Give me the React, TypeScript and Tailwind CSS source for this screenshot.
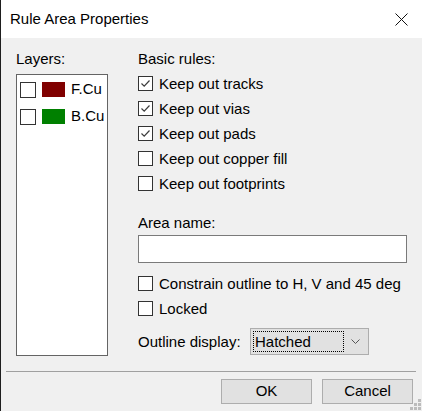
import * as React from "react";

const FONT = { fontFamily: '"Liberation Sans", Arial, sans-serif' };

function CheckBox({ checked = false, size = 15 }: { checked?: boolean; size?: number }) {
  return (
    <span
      className="flex items-center justify-center border border-[#333333] bg-white shrink-0"
      style={{ width: size, height: size }}
    >
      {checked && (
        <svg width="11" height="11" viewBox="0 0 11 11">
          <path d="M1.5 5.5 L4.2 8.2 L9.5 2.5" fill="none" stroke="#3c3c3c" strokeWidth="1.2" />
        </svg>
      )}
    </span>
  );
}

function RuleRow({ label, checked }: { label: string; checked?: boolean }) {
  return (
    <div className="flex items-center h-[25px] gap-[6px]">
      <CheckBox checked={checked} />
      <span>{label}</span>
    </div>
  );
}

function LayerRow({ name, color }: { name: string; color: string }) {
  return (
    <div className="flex items-center h-[27px]">
      <CheckBox size={16} />
      <span className={`ml-[6px] w-[23px] h-[15px] ${color}`} />
      <span className="ml-[6px]">{name}</span>
    </div>
  );
}

export default function App(): React.JSX.Element {
  return (
    <div
      className="relative w-[422px] h-[411px] bg-[#f0f0f0] border-l border-[#1e1e1e] flex flex-col text-[15px] text-black overflow-hidden"
      style={FONT}
    >
      {/* Title bar */}
      <div className="h-[38px] bg-white flex items-center justify-between pl-[9px] pr-[14px] shrink-0">
        <span>Rule Area Properties</span>
        <svg width="13" height="13" viewBox="0 0 13 13">
          <path d="M0.5 0.5 L12.5 12.5 M12.5 0.5 L0.5 12.5" stroke="#111" strokeWidth="1" />
        </svg>
      </div>

      {/* Body */}
      <div className="flex pt-[11px] pl-[15px]">
        {/* Layers */}
        <div className="flex flex-col w-[92px]">
          <div className="leading-[20px]">Layers:</div>
          <div className="mt-[5px] h-[282px] bg-white border border-[#646464] pl-[3px] pt-[1px]">
            <LayerRow name="F.Cu" color="bg-[#800000]" />
            <LayerRow name="B.Cu" color="bg-[#008000]" />
          </div>
        </div>

        {/* Rules */}
        <div className="flex flex-col ml-[30px] w-[269px] leading-[20px]">
          <div>Basic rules:</div>
          <div className="mt-[2px]">
            <RuleRow label="Keep out tracks" checked />
            <RuleRow label="Keep out vias" checked />
            <RuleRow label="Keep out pads" checked />
            <RuleRow label="Keep out copper fill" />
            <RuleRow label="Keep out footprints" />
          </div>
          <div className="mt-[17px]">Area name:</div>
          <input
            className="mt-[2px] h-[28px] w-full bg-white border border-[#7a7a7a] outline-none px-1"
            style={FONT}
          />
          <div className="mt-[8px]">
            <RuleRow label="Constrain outline to H, V and 45 deg" />
            <RuleRow label="Locked" />
          </div>
          <div className="mt-[7px] flex items-center h-[27px]">
            <span className="w-[112px]">Outline display:</span>
            <div className="w-[119px] h-[27px] bg-[#e1e1e1] border border-[#adadad] flex items-center pl-[2px] pr-[8px]">
              <div className="w-[91px] h-[21px] border border-dotted border-black flex items-center pl-[1px]">
                Hatched
              </div>
              <svg className="ml-auto" width="9" height="5" viewBox="0 0 9 5">
                <path d="M0.5 0.5 L4.5 4.5 L8.5 0.5" fill="none" stroke="#555" strokeWidth="1" />
              </svg>
            </div>
          </div>
        </div>
      </div>

      {/* Separator */}
      <div className="mt-[15px] ml-[5px] w-[410px] h-[1px] bg-[#a0a0a0]" />

      {/* Buttons */}
      <div className="mt-[7px] flex justify-end gap-[10px] pr-[9px]">
        <button className="w-[91px] h-[25px] bg-[#e1e1e1] border border-[#adadad]" style={FONT}>
          OK
        </button>
        <button className="w-[91px] h-[25px] bg-[#e1e1e1] border border-[#adadad]" style={FONT}>
          Cancel
        </button>
      </div>

      {/* Resize grip */}
      <svg className="absolute right-[1px] bottom-[1px]" width="11" height="11" viewBox="0 0 11 11">
        <g fill="#bcbcbc">
          <rect x="8" y="0" width="3" height="3" />
          <rect x="4" y="4" width="3" height="3" />
          <rect x="8" y="4" width="3" height="3" />
          <rect x="0" y="8" width="3" height="3" />
          <rect x="4" y="8" width="3" height="3" />
          <rect x="8" y="8" width="3" height="3" />
        </g>
      </svg>
    </div>
  );
}
